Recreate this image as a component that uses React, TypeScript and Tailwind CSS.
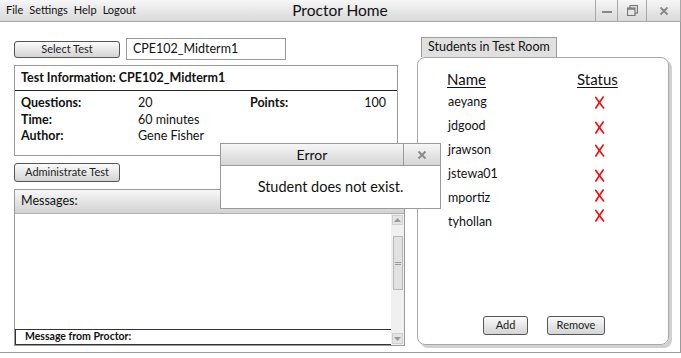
import React from "react";

const students = [
  { name: "aeyang", dy: 0 },
  { name: "jdgood", dy: 1 },
  { name: "jrawson", dy: 0 },
  { name: "jstewa01", dy: 1 },
  { name: "mportiz", dy: -3 },
  { name: "tyhollan", dy: -7 },
];

const RedX = () => (
  <svg width="11" height="13" viewBox="0 0 12 14">
    <path d="M2 1.5 C4.5 5 7.5 9.5 10.5 13" stroke="#f01010" strokeWidth="1.8" fill="none" strokeLinecap="round" />
    <path d="M10 1 C7.5 4.5 4.5 9 2 13" stroke="#f01010" strokeWidth="1.8" fill="none" strokeLinecap="round" />
  </svg>
);

const GrayButton = ({ label, className }: { label: string; className: string }) => (
  <div
    className={`flex items-center justify-center rounded-[3px] border border-[#555] bg-linear-to-b from-[#fbfbfb] to-[#d4d4d4] text-[11px] text-[#222] ${className}`}
  >
    {label}
  </div>
);

export default function App() {
  return (
    <div className="relative h-[358px] w-[681px] overflow-hidden bg-white font-['Lato','Noto_Sans',sans-serif] text-[#111]">
      {/* Title bar */}
      <div className="flex h-[22px] items-stretch border-b border-[#a8a8a8] bg-linear-to-b from-[#f6f6f6] to-[#d9d9d9]">
        <div className="flex w-[200px] items-center gap-[6px] pl-[6px] text-[11px]">
          <span>File</span>
          <span>Settings</span>
          <span>Help</span>
          <span>Logout</span>
        </div>
        <div className="flex w-[280px] items-center justify-center text-[15.5px]">Proctor Home</div>
        <div className="flex-1" />
        <div className="flex">
          <div className="flex w-[22px] items-center justify-center border-l border-[#a8a8a8] text-[#777]">
            <div className="mt-[3px] h-[2px] w-[10px] bg-[#888]" />
          </div>
          <div className="flex w-[29px] items-center justify-center border-l border-[#a8a8a8]">
            <svg width="11" height="11" viewBox="0 0 11 11">
              <rect x="3" y="0.5" width="7.5" height="7.5" fill="none" stroke="#777" strokeWidth="1.2" />
              <rect x="0.5" y="3" width="7.5" height="7.5" fill="#e8e8e8" stroke="#777" strokeWidth="1.2" />
              <line x1="0.5" y1="4" x2="8" y2="4" stroke="#777" strokeWidth="1.5" />
            </svg>
          </div>
          <div className="flex w-[35px] items-center justify-center border-l border-r border-[#a8a8a8]">
            <svg width="10" height="10" viewBox="0 0 10 10">
              <path d="M1.5 1.5 L8.5 8.5 M8.5 1.5 L1.5 8.5" stroke="#888" strokeWidth="1.8" />
            </svg>
          </div>
        </div>
      </div>

      {/* Body */}
      <div className="flex h-[331px] border-b border-r border-[#9a9a9a] pl-[14px]">
        {/* Left column */}
        <div className="flex w-[391px] flex-col">
          <div className="mt-[16px] flex h-[22px] items-center gap-[6px]">
            <GrayButton label="Select Test" className="h-[17px] w-[106px]" />
            <div className="flex h-[22px] w-[160px] items-center border border-[#9a9a9a] pl-[6px] text-[12.5px]">
              CPE102_Midterm1
            </div>
          </div>

          <div className="mt-[5px] h-[91px] w-[384px] border border-[#9a9a9a]">
            <div className="flex h-[25px] items-center border-b border-[#222] pl-[6px] text-[12.5px] font-bold">
              Test Information: CPE102_Midterm1
            </div>
            <div className="grid grid-cols-[117px_112px_114px_1fr] pl-[6px] pr-[11px] pt-[4px] text-[12.5px] leading-[16.5px]">
              <span className="font-bold">Questions:</span>
              <span>20</span>
              <span className="font-bold">Points:</span>
              <span className="text-right">100</span>
              <span className="font-bold">Time:</span>
              <span>60 minutes</span>
              <span />
              <span />
              <span className="font-bold">Author:</span>
              <span>Gene Fisher</span>
              <span />
              <span />
            </div>
          </div>

          <GrayButton label="Administrate Test" className="mt-[7px] h-[19px] w-[106px]" />

          <div className="mt-[7px] flex h-[157px] flex-col border border-[#9a9a9a]">
            <div className="flex h-[24px] items-center border-b border-[#b0b0b0] bg-linear-to-b from-[#f7f7f7] to-[#d2d2d2] pl-[6px] text-[12.5px]">
              Messages:
            </div>
            <div className="flex flex-1">
              <div className="flex flex-1 flex-col justify-end">
                <div className="flex h-[16px] items-center border border-r-0 border-[#333] pl-[9px] text-[10.5px] font-bold">
                  Message from Proctor:
                </div>
              </div>
              <div className="flex w-[13px] flex-col items-center bg-[#f0f0f0] pb-[1px] pt-[1px]">
                <div className="flex h-[10px] w-[11px] items-center justify-center border border-[#d0d0d0] bg-[#e4e4e4]">
                  <svg width="7" height="4" viewBox="0 0 7 4">
                    <path d="M0 4 L3.5 0 L7 4 Z" fill="#999" />
                  </svg>
                </div>
                <div className="mt-[11px] flex h-[54px] w-[10px] items-center justify-center border border-[#b8b8b8] bg-[#e2e2e2]">
                  <div className="flex w-[6px] flex-col gap-[1px]">
                    <div className="h-px bg-[#999]" />
                    <div className="h-px bg-[#999]" />
                  </div>
                </div>
                <div className="flex-1" />
                <div className="flex h-[11px] w-[11px] items-center justify-center border border-[#d0d0d0] bg-[#e4e4e4]">
                  <svg width="7" height="4" viewBox="0 0 7 4">
                    <path d="M0 0 L3.5 4 L7 0 Z" fill="#999" />
                  </svg>
                </div>
              </div>
            </div>
          </div>
        </div>

        {/* Right column */}
        <div className="ml-[12px] flex w-[255px] flex-col">
          <div className="ml-[4px] mt-[15px] flex h-[20px] w-[136px] items-center border border-b-0 border-[#9a9a9a] bg-[#e0e0e0] pl-[6px] text-[12.5px]">
            Students in Test Room
          </div>
          <div className="flex h-[288px] w-[252px] flex-col rounded-[8px] border border-[#a8a8a8] shadow-[3px_3px_0_#d0d0d0]">
            <div className="mt-[12px] grid grid-cols-[130px_1fr] pl-[29px] text-[15px] leading-[18px]">
              <span className="underline underline-offset-2">Name</span>
              <span className="underline underline-offset-2">Status</span>
            </div>
            <div className="mt-[2px] flex flex-col">
              {students.map((s) => (
                <div key={s.name} className="grid h-[24px] grid-cols-[146px_1fr] items-center pl-[30px] text-[12.5px]">
                  <span>{s.name}</span>
                  <span className="relative flex" style={{ top: s.dy }}>
                    <RedX />
                  </span>
                </div>
              ))}
            </div>
            <div className="flex-1" />
            <div className="mb-[9px] flex gap-[19px] pl-[65px]">
              <GrayButton label="Add" className="h-[19px] w-[45px]" />
              <GrayButton label="Remove" className="h-[19px] w-[58px]" />
            </div>
          </div>
        </div>
      </div>

      {/* Error dialog */}
      <div className="absolute left-[220px] top-[143px] flex h-[66px] w-[221px] flex-col border border-[#9a9a9a] bg-white">
        <div className="flex h-[22px] border-b border-[#9a9a9a] bg-linear-to-b from-[#f6f6f6] to-[#d6d6d6]">
          <div className="flex flex-1 items-center justify-center text-[14px]">Error</div>
          <div className="flex w-[37px] items-center justify-center border-l border-[#9a9a9a]">
            <svg width="10" height="10" viewBox="0 0 10 10">
              <path d="M1.5 1.5 L8.5 8.5 M8.5 1.5 L1.5 8.5" stroke="#888" strokeWidth="1.8" />
            </svg>
          </div>
        </div>
        <div className="flex flex-1 items-center justify-center text-[14.5px]">Student does not exist.</div>
      </div>
    </div>
  );
}
